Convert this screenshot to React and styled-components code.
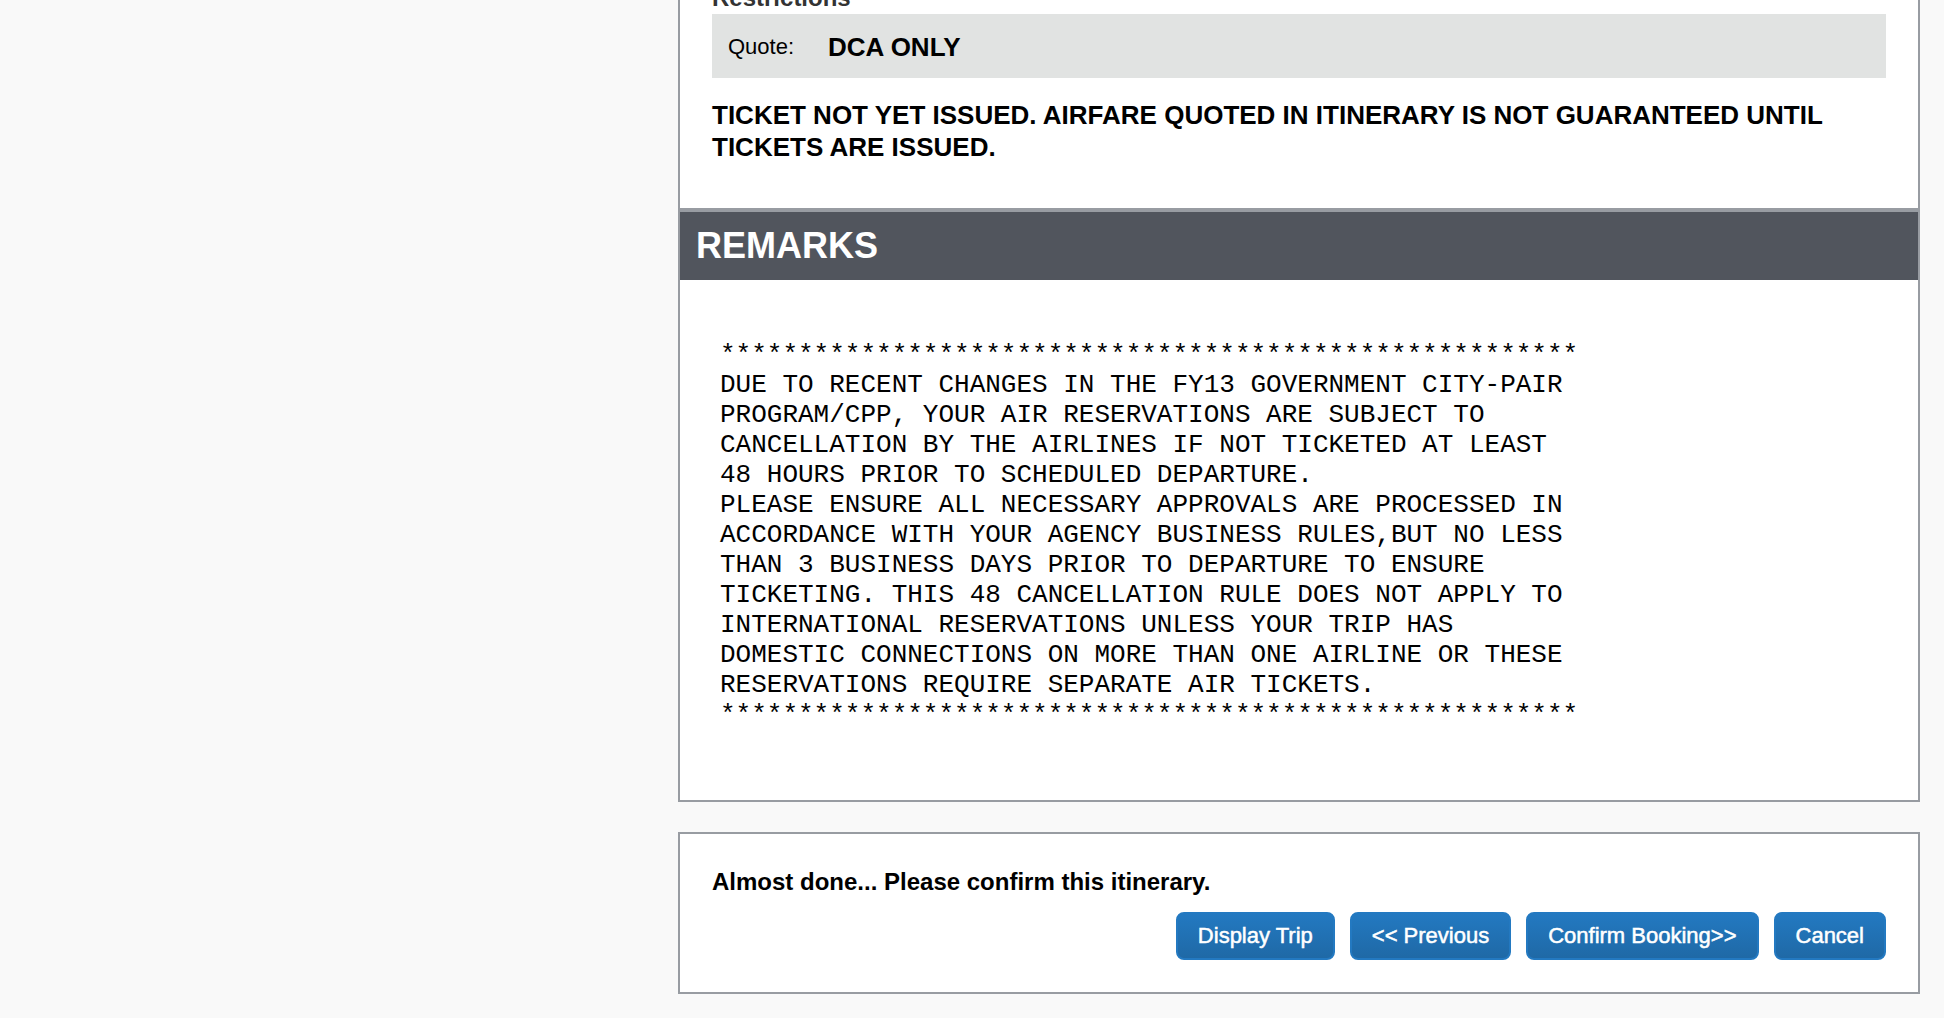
import React from "react";
import styled, { createGlobalStyle } from "styled-components";

const GlobalStyle = createGlobalStyle`
  * { box-sizing: border-box; }
  body {
    margin: 0;
    background: #f9f9f9;
    color: #000;
    font-family: "Liberation Sans", Arial, sans-serif;
    overflow: hidden;
  }
`;

const Page = styled.div`
  display: grid;
  grid-template-columns: 678fr 1242fr;
  padding-right: 24px;
`;

const Content = styled.main`
  grid-column: 2;
  display: flex;
  flex-direction: column;
  gap: 30px;
  margin-top: -18px;
`;

const Panel = styled.section`
  background: #fff;
  border: 2px solid #989ca2;
`;

const Fare = styled.div`
  padding: 0 32px 32px;
`;

const Restrictions = styled.h3`
  margin: 0;
  padding-bottom: 2px;
  color: #333;
  font-size: 24px;
  line-height: 28px;
`;

const QuoteRow = styled.dl`
  display: flex;
  align-items: center;
  gap: 34px;
  margin: 0;
  padding: 17px 16px 15px;
  background: #e1e3e2;
  line-height: 32px;
`;

const QuoteLabel = styled.dt`
  font-size: 22px;
`;

const QuoteValue = styled.dd`
  margin: 0;
  font-size: 26px;
  font-weight: bold;
`;

const Notice = styled.p`
  margin: 21px 0 13px;
  font-size: 26px;
  font-weight: bold;
  line-height: 32px;
`;

const SectionTitle = styled.h2`
  margin: 0;
  padding: 14px 16px;
  border-top: 4px solid #989ca2;
  background: #51555d;
  color: #fff;
  font-size: 36px;
  line-height: 40px;
`;

const Remarks = styled.pre`
  margin: 0;
  padding: 60px 40px 70px;
  font-family: "Liberation Mono", "Courier New", monospace;
  font-size: 26px;
  line-height: 30px;
`;

const ConfirmPanel = styled(Panel)`
  padding: 32px;
`;

const Prompt = styled.p`
  margin: 0 0 14px;
  font-size: 24px;
  font-weight: bold;
  line-height: 32px;
`;

const Actions = styled.div`
  display: flex;
  flex-wrap: wrap;
  justify-content: flex-end;
  gap: 15px;
`;

const Button = styled.button`
  height: 48px;
  padding: 0 20px;
  border: 2px solid #2379c1;
  border-radius: 8px;
  background: linear-gradient(#2379c1, #1f69a6);
  color: #fff;
  font-family: inherit;
  font-size: 22px;
  -webkit-text-stroke: 0.5px #fff;
`;

const stars = "*".repeat(55);

const remarks = [
  stars,
  "DUE TO RECENT CHANGES IN THE FY13 GOVERNMENT CITY-PAIR",
  "PROGRAM/CPP, YOUR AIR RESERVATIONS ARE SUBJECT TO",
  "CANCELLATION BY THE AIRLINES IF NOT TICKETED AT LEAST",
  "48 HOURS PRIOR TO SCHEDULED DEPARTURE.",
  "PLEASE ENSURE ALL NECESSARY APPROVALS ARE PROCESSED IN",
  "ACCORDANCE WITH YOUR AGENCY BUSINESS RULES,BUT NO LESS",
  "THAN 3 BUSINESS DAYS PRIOR TO DEPARTURE TO ENSURE",
  "TICKETING. THIS 48 CANCELLATION RULE DOES NOT APPLY TO",
  "INTERNATIONAL RESERVATIONS UNLESS YOUR TRIP HAS",
  "DOMESTIC CONNECTIONS ON MORE THAN ONE AIRLINE OR THESE",
  "RESERVATIONS REQUIRE SEPARATE AIR TICKETS.",
  stars,
];

const actions = ["Display Trip", "<< Previous", "Confirm Booking>>", "Cancel"];

export default function App() {
  return (
    <>
      <GlobalStyle />
      <Page>
        <Content>
          <Panel>
            <Fare>
              <Restrictions>Restrictions</Restrictions>
              <QuoteRow>
                <QuoteLabel>Quote:</QuoteLabel>
                <QuoteValue>DCA ONLY</QuoteValue>
              </QuoteRow>
              <Notice>
                TICKET NOT YET ISSUED. AIRFARE QUOTED IN ITINERARY IS NOT
                GUARANTEED UNTIL TICKETS ARE ISSUED.
              </Notice>
            </Fare>
            <SectionTitle>REMARKS</SectionTitle>
            <Remarks>{remarks.join("\n")}</Remarks>
          </Panel>
          <ConfirmPanel>
            <Prompt>Almost done... Please confirm this itinerary.</Prompt>
            <Actions>
              {actions.map((label) => (
                <Button type="button" key={label}>
                  {label}
                </Button>
              ))}
            </Actions>
          </ConfirmPanel>
        </Content>
      </Page>
    </>
  );
}
